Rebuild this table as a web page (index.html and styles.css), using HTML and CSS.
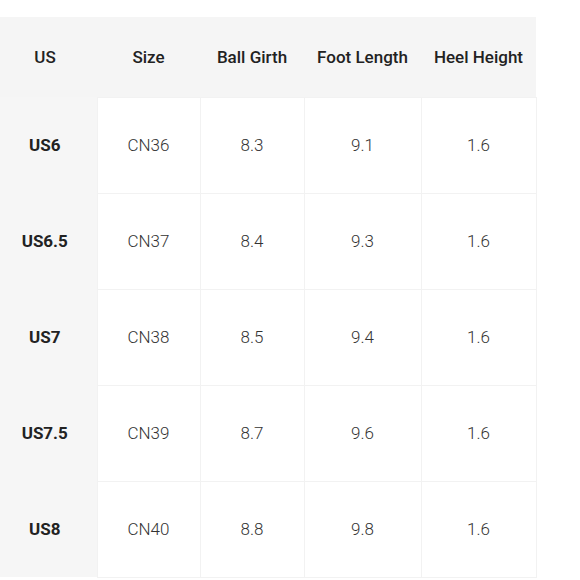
FILE: index.html
```html
<!DOCTYPE html>
<html>
<head>
<meta charset="utf-8">
<link rel="stylesheet" href="styles.css">
</head>
<body>
<table class="size-table">
  <colgroup>
    <col class="c1"><col class="c2"><col class="c3"><col class="c4"><col class="c5">
  </colgroup>
  <thead>
    <tr class="head-row"><th>US</th><th>Size</th><th>Ball Girth</th><th>Foot Length</th><th>Heel Height</th></tr>
  </thead>
  <tbody>
    <tr class="body-row"><th>US6</th><td>CN36</td><td>8.3</td><td>9.1</td><td>1.6</td></tr>
    <tr class="body-row"><th>US6.5</th><td>CN37</td><td>8.4</td><td>9.3</td><td>1.6</td></tr>
    <tr class="body-row"><th>US7</th><td>CN38</td><td>8.5</td><td>9.4</td><td>1.6</td></tr>
    <tr class="body-row"><th>US7.5</th><td>CN39</td><td>8.7</td><td>9.6</td><td>1.6</td></tr>
    <tr class="body-row"><th>US8</th><td>CN40</td><td>8.8</td><td>9.8</td><td>1.6</td></tr>
  </tbody>
</table>
</body>
</html>
```
FILE: styles.css
```css
html, body { margin: 0; padding: 0; background: #fff; }
body { padding-top: 17px; font-family: Roboto, "Liberation Sans", sans-serif; overflow: hidden; }
.size-table {
  width: 543px;
  margin-left: -7px;
  border-collapse: collapse;
  table-layout: fixed;
  font-size: 17px;
  line-height: 20px;
  color: #333;
}
.c1 { width: 104px; }
.c2 { width: 103px; }
.c3 { width: 104px; }
.c4 { width: 117px; }
.c5 { width: 115px; }
.head-row { height: 80px; }
.body-row { height: 96px; }
.size-table th, .size-table td { padding: 0; text-align: center; }
.size-table thead th {
  background: #f5f5f5;
  font-weight: 500;
  color: #222;
}
.size-table tbody th {
  background: #f6f6f6;
  font-weight: 700;
  color: #222;
}
.size-table td {
  border: 1px solid #f2f2f2;
  font-weight: 300;
  color: #333;
}
```
